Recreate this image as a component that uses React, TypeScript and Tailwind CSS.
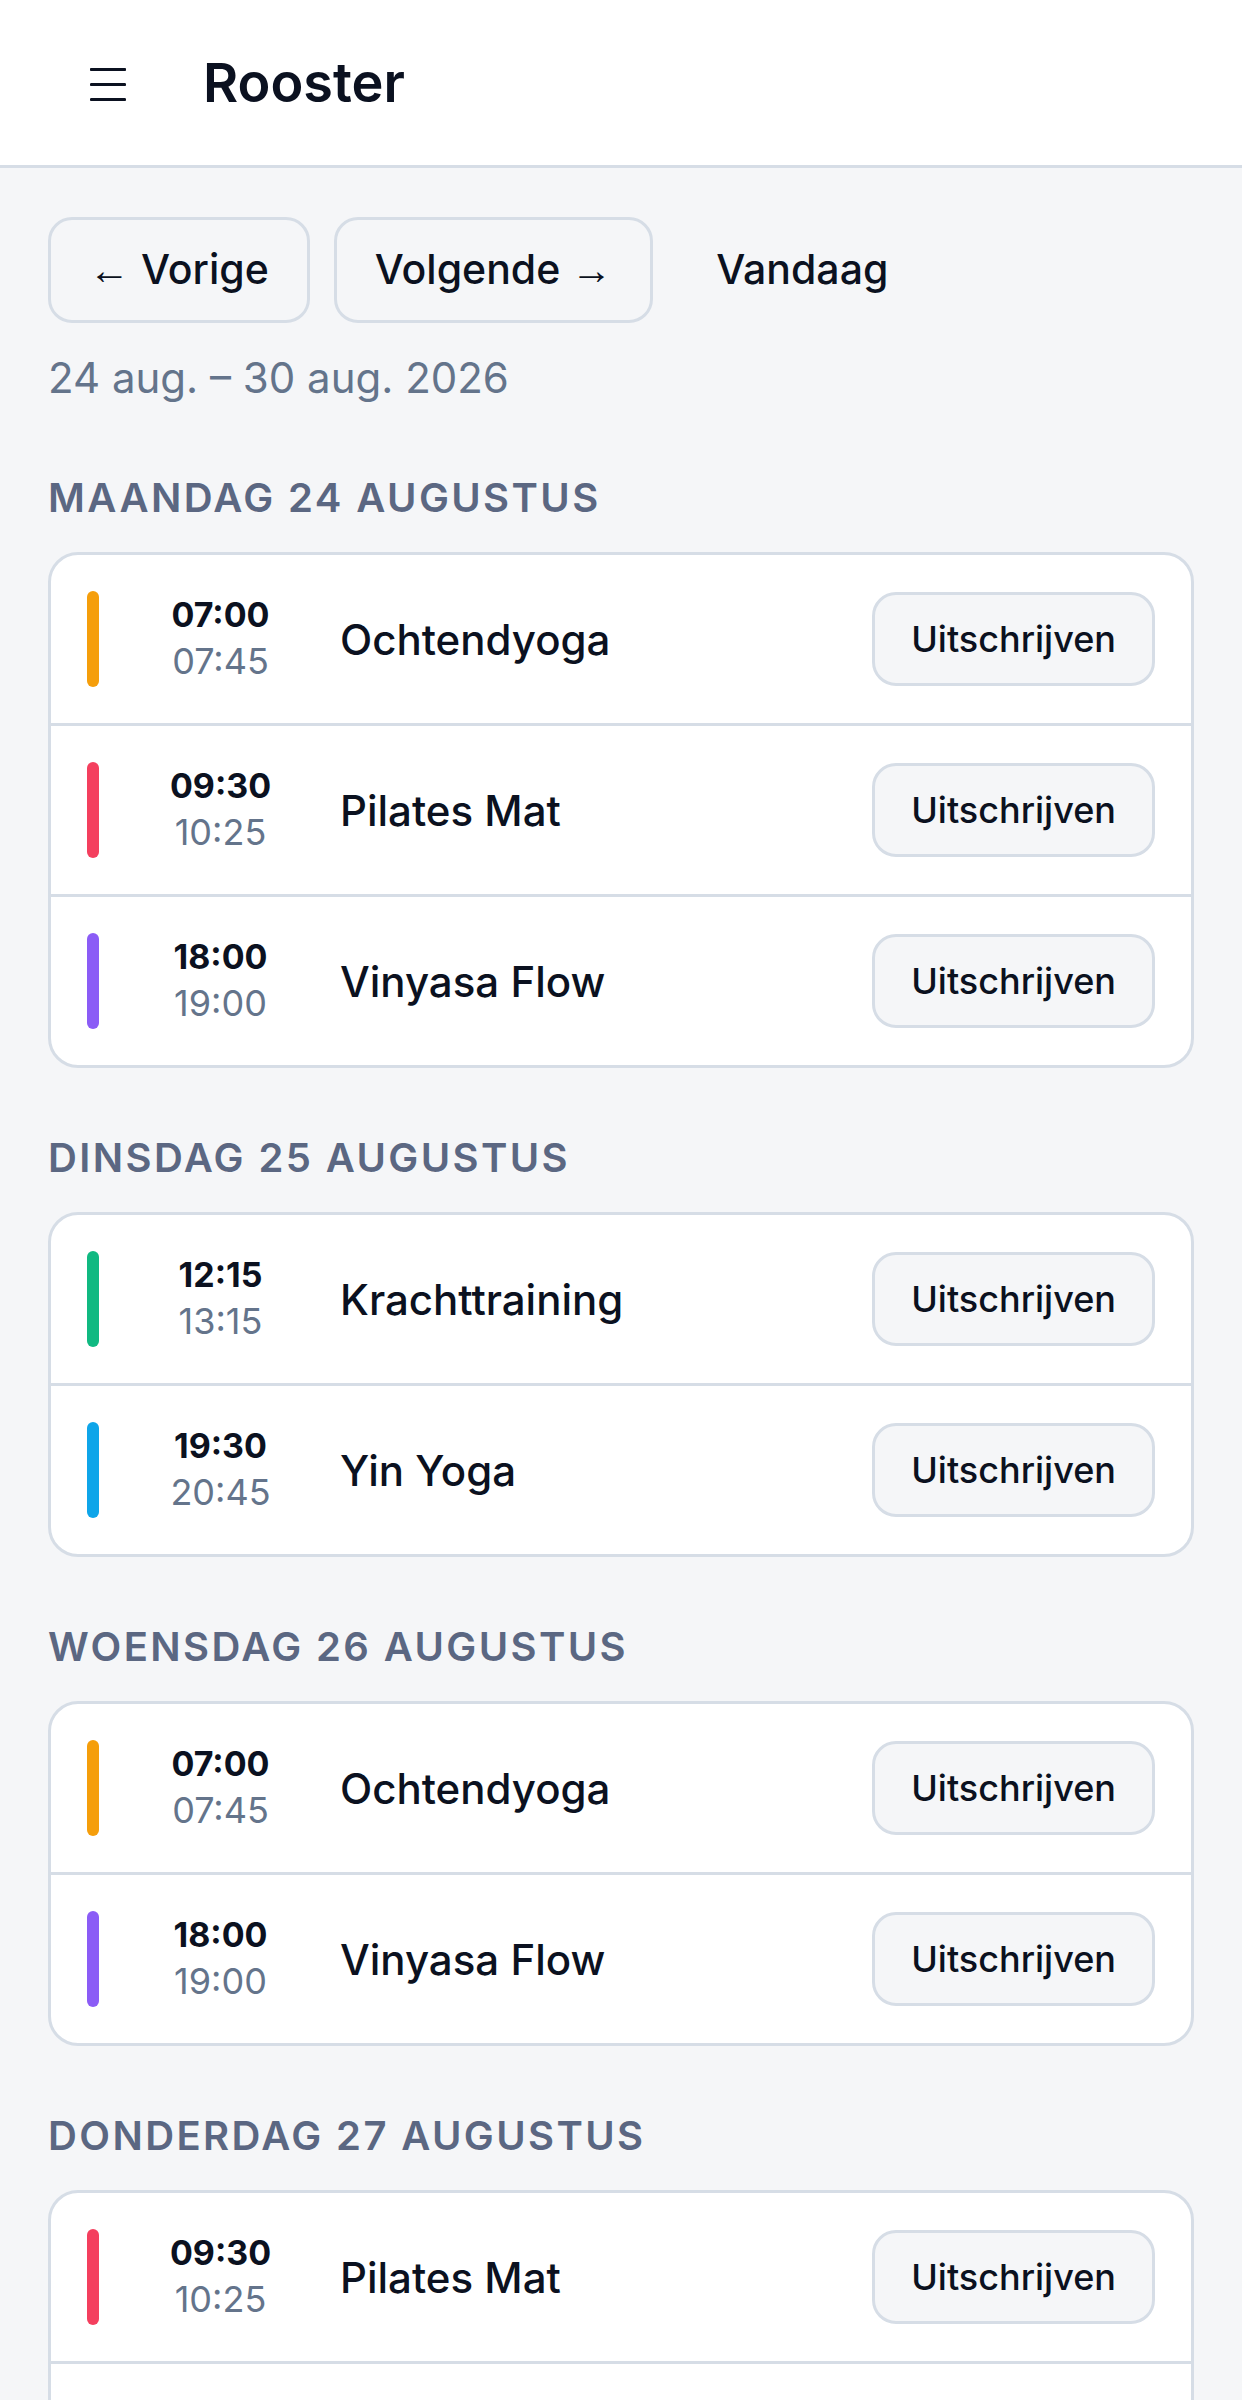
import React from 'react';

type Session = {
  start: string;
  end: string;
  name: string;
  color: string;
};

type Day = {
  label: string;
  sessions: Session[];
};

const days: Day[] = [
  {
    label: 'Maandag 24 augustus',
    sessions: [
      { start: '07:00', end: '07:45', name: 'Ochtendyoga', color: 'bg-[#f59e0b]' },
      { start: '09:30', end: '10:25', name: 'Pilates Mat', color: 'bg-[#f43f5e]' },
      { start: '18:00', end: '19:00', name: 'Vinyasa Flow', color: 'bg-[#8b5cf6]' },
    ],
  },
  {
    label: 'Dinsdag 25 augustus',
    sessions: [
      { start: '12:15', end: '13:15', name: 'Krachttraining', color: 'bg-[#10b981]' },
      { start: '19:30', end: '20:45', name: 'Yin Yoga', color: 'bg-[#0ea5e9]' },
    ],
  },
  {
    label: 'Woensdag 26 augustus',
    sessions: [
      { start: '07:00', end: '07:45', name: 'Ochtendyoga', color: 'bg-[#f59e0b]' },
      { start: '18:00', end: '19:00', name: 'Vinyasa Flow', color: 'bg-[#8b5cf6]' },
    ],
  },
  {
    label: 'Donderdag 27 augustus',
    sessions: [
      { start: '09:30', end: '10:25', name: 'Pilates Mat', color: 'bg-[#f43f5e]' },
      { start: '12:15', end: '13:15', name: 'Krachttraining', color: 'bg-[#10b981]' },
    ],
  },
];

const MenuIcon = () => (
  <svg width="36" height="33" viewBox="0 0 36 33" fill="none" className="mt-[4px]">
    <path d="M1.5 1.5h33M1.5 16.5h33M1.5 31.5h33" stroke="#0b1120" strokeWidth="3.2" strokeLinecap="round" />
  </svg>
);

// the arrows in the nav buttons are the thin ones, not Inter's
const Arrow = ({ children }: { children: React.ReactNode }) => (
  <span className="font-['Liberation_Sans',sans-serif] font-normal">{children}</span>
);

const SessionRow: React.FC<{ session: Session }> = ({ session }) => (
  <div className="box-content flex items-center h-[168px] px-[36px]">
    <div className={`w-[12px] h-[96px] rounded-full ${session.color}`} />
    <div className="w-[171px] ml-[36px] flex flex-col items-center">
      <span className="text-[34px] leading-[45px] font-bold text-[#0b1120]">{session.start}</span>
      <span className="text-[36px] leading-[49px] text-[#64748b]">{session.end}</span>
    </div>
    <div className="ml-[34px] flex-1 text-[42px] font-medium text-[#0b1120]">{session.name}</div>
    <button className="h-[94px] px-[36px] rounded-[24px] border-[3px] border-[#d6dde6] bg-[#f5f6f8] text-[36px] font-medium text-[#0b1120]">
      Uitschrijven
    </button>
  </div>
);

export default function App() {
  return (
    <div className="min-h-screen bg-[#f5f6f8] font-['Inter',sans-serif]">
      <header className="h-[168px] bg-white border-b-[3px] border-[#d6dde6] flex items-center pl-[90px] gap-[77px]">
        <MenuIcon />
        <h1 className="text-[54px] font-semibold text-[#0b1120]">Rooster</h1>
      </header>

      <main className="px-[48px] pt-[49px] pb-[60px]">
        <div className="flex items-center gap-[24px]">
          <button className="h-[106px] px-[38px] rounded-[24px] border-[3px] border-[#d6dde6] bg-[#f5f6f8] text-[41px] font-medium text-[#0b1120]">
            <Arrow>←</Arrow> Vorige
          </button>
          <button className="h-[106px] px-[38px] rounded-[24px] border-[3px] border-[#d6dde6] bg-[#f5f6f8] text-[41px] font-medium text-[#0b1120]">
            Volgende <Arrow>→</Arrow>
          </button>
          <button className="h-[106px] pl-[36px] pr-[38px] rounded-[24px] border-[3px] border-transparent text-[41px] font-medium text-[#0b1120]">
            Vandaag
          </button>
        </div>
        <p className="mt-[25px] text-[42px] leading-[60px] text-[#64748b]">24 aug. – 30 aug. 2026</p>

        {days.map((day) => (
          <section key={day.label} className="mt-[60px]">
            <h2 className="text-[40px] leading-[60px] font-semibold uppercase tracking-[0.06em] text-[#5b6782]">
              {day.label}
            </h2>
            <div className="mt-[24px] bg-white border-[3px] border-[#d6dde6] rounded-[30px] divide-y-[3px] divide-[#d6dde6] overflow-hidden">
              {day.sessions.map((s, i) => (
                <SessionRow key={i} session={s} />
              ))}
            </div>
          </section>
        ))}
      </main>
    </div>
  );
}
